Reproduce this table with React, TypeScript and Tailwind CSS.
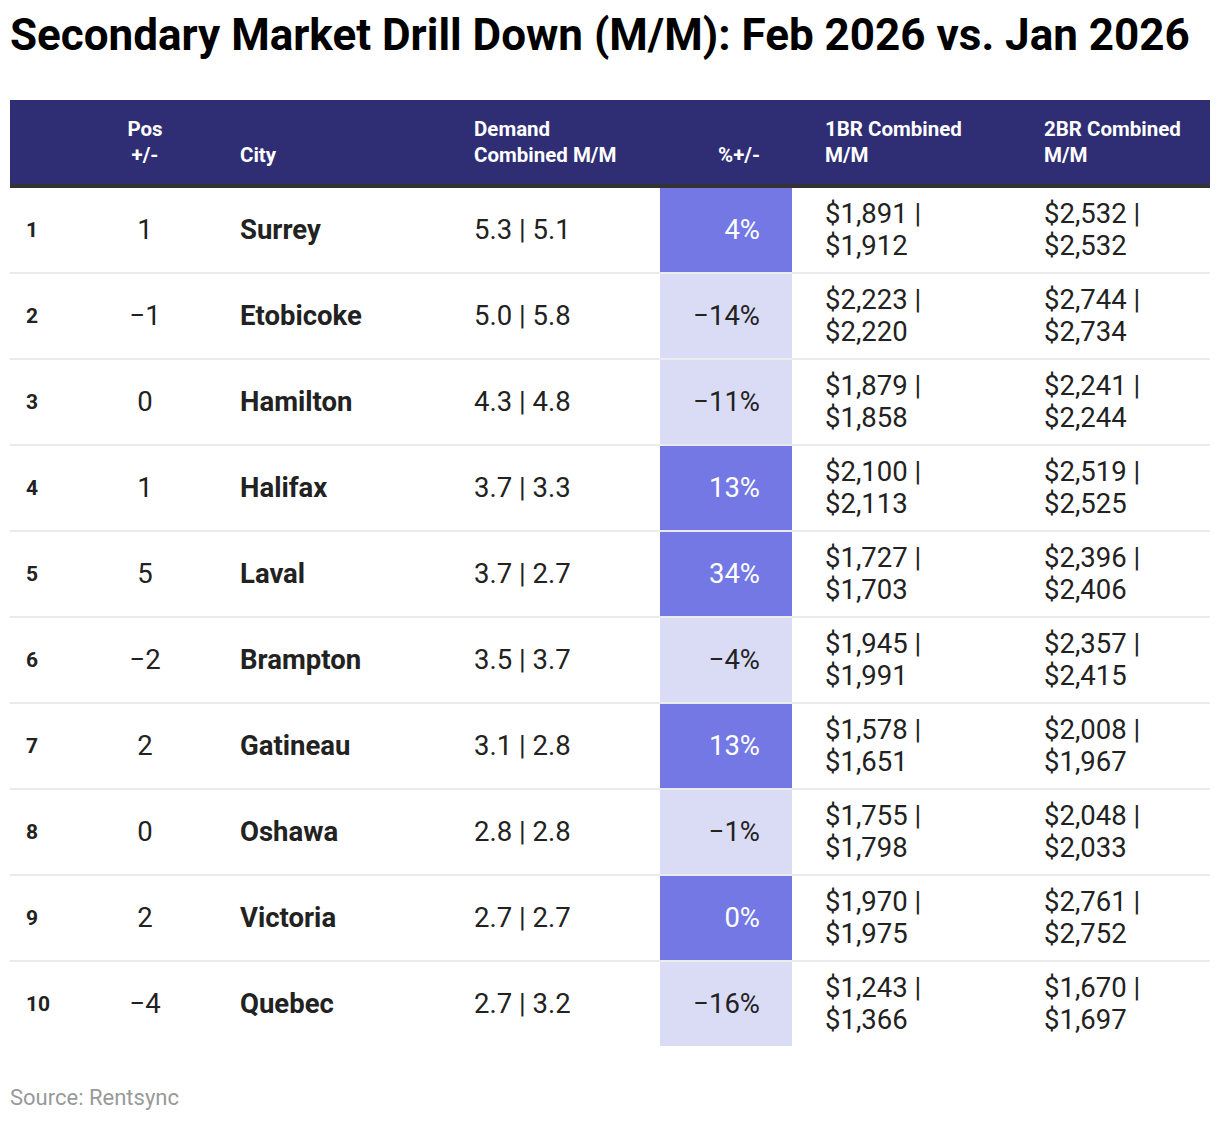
import React from "react";

const rows = [
  { rank: 1, pos: "1", city: "Surrey", demand: "5.3 | 5.1", pct: "4%", up: true, br1: ["$1,891 |", "$1,912"], br2: ["$2,532 |", "$2,532"] },
  { rank: 2, pos: "\u22121", city: "Etobicoke", demand: "5.0 | 5.8", pct: "\u221214%", up: false, br1: ["$2,223 |", "$2,220"], br2: ["$2,744 |", "$2,734"] },
  { rank: 3, pos: "0", city: "Hamilton", demand: "4.3 | 4.8", pct: "\u221211%", up: false, br1: ["$1,879 |", "$1,858"], br2: ["$2,241 |", "$2,244"] },
  { rank: 4, pos: "1", city: "Halifax", demand: "3.7 | 3.3", pct: "13%", up: true, br1: ["$2,100 |", "$2,113"], br2: ["$2,519 |", "$2,525"] },
  { rank: 5, pos: "5", city: "Laval", demand: "3.7 | 2.7", pct: "34%", up: true, br1: ["$1,727 |", "$1,703"], br2: ["$2,396 |", "$2,406"] },
  { rank: 6, pos: "\u22122", city: "Brampton", demand: "3.5 | 3.7", pct: "\u22124%", up: false, br1: ["$1,945 |", "$1,991"], br2: ["$2,357 |", "$2,415"] },
  { rank: 7, pos: "2", city: "Gatineau", demand: "3.1 | 2.8", pct: "13%", up: true, br1: ["$1,578 |", "$1,651"], br2: ["$2,008 |", "$1,967"] },
  { rank: 8, pos: "0", city: "Oshawa", demand: "2.8 | 2.8", pct: "\u22121%", up: false, br1: ["$1,755 |", "$1,798"], br2: ["$2,048 |", "$2,033"] },
  { rank: 9, pos: "2", city: "Victoria", demand: "2.7 | 2.7", pct: "0%", up: true, br1: ["$1,970 |", "$1,975"], br2: ["$2,761 |", "$2,752"] },
  { rank: 10, pos: "\u22124", city: "Quebec", demand: "2.7 | 3.2", pct: "\u221216%", up: false, br1: ["$1,243 |", "$1,366"], br2: ["$1,670 |", "$1,697"] },
];

const cols = "grid grid-cols-[100px_70px_278px_202px_132px_219px_199px]";

export default function App() {
  return (
    <div className="w-[1220px] h-[1122px] bg-white px-[10px] font-['Roboto',sans-serif] text-[#222]">
      {/* Title */}
      <div className="h-[100px] pt-[8px]">
        <h1 className="text-[44px] leading-[54px] font-bold text-black">
          Secondary Market Drill Down (M/M): Feb 2026 vs. Jan 2026
        </h1>
      </div>

      {/* Header */}
      <div className={`${cols} h-[88px] bg-[#2f2e74] border-b-4 border-[#333] text-white text-[20.5px] font-bold leading-[26px] items-end pb-[16px]`}>
        <div />
        <div className="text-center">Pos<br />+/-</div>
        <div className="pl-[60px]">City</div>
        <div className="pl-4">Demand<br />Combined M/M</div>
        <div className="text-right pr-[32px]">%+/-</div>
        <div className="pl-[33px]">1BR Combined<br />M/M</div>
        <div className="pl-[33px]">2BR Combined<br />M/M</div>
      </div>

      {/* Body */}
      <div>
        {rows.map((r, i) => (
          <div
            key={r.rank}
            className={`${cols} items-center text-[27.5px] leading-[32px] ${i < rows.length - 1 ? "h-[86px] border-b-2 border-[#ebebeb]" : "h-[84px]"}`}
          >
            <div className="pl-4 text-[21px] font-bold">{r.rank}</div>
            <div className="text-center">{r.pos}</div>
            <div className="pl-[60px] font-bold">{r.city}</div>
            <div className="pl-4">{r.demand}</div>
            <div
              className={`h-full flex items-center justify-end pr-[32px] ${r.up ? "bg-[#7378e5] text-white" : "bg-[#dadbf5] text-[#222]"}`}
            >
              {r.pct}
            </div>
            <div className="pl-[33px]">{r.br1[0]}<br />{r.br1[1]}</div>
            <div className="pl-[33px]">{r.br2[0]}<br />{r.br2[1]}</div>
          </div>
        ))}
      </div>

      <div className="mt-[40px] text-[22px] leading-[24px] text-[#999]">Source: Rentsync</div>
    </div>
  );
}
